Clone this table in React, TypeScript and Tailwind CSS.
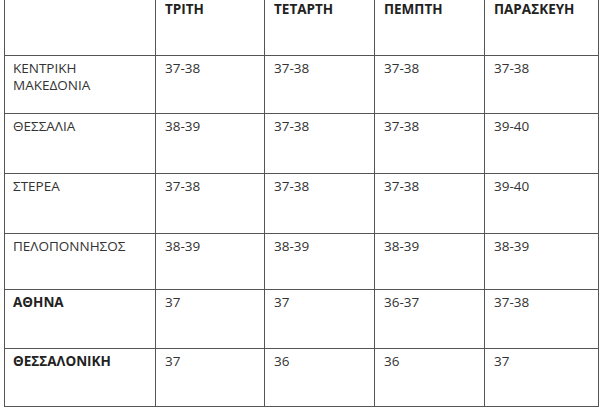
const days = ['ΤΡΙΤΗ', 'ΤΕΤΑΡΤΗ', 'ΠΕΜΠΤΗ', 'ΠΑΡΑΣΚΕΥΗ'];

type Row = {
  region: string[];
  bold?: boolean;
  values: string[];
  height: string;
};

const rows: Row[] = [
  { region: ['ΚΕΝΤΡΙΚΗ', 'ΜΑΚΕΔΟΝΙΑ'], values: ['37-38', '37-38', '37-38', '37-38'], height: 'h-[58px]' },
  { region: ['ΘΕΣΣΑΛΙΑ'], values: ['38-39', '37-38', '37-38', '39-40'], height: 'h-[60px]' },
  { region: ['ΣΤΕΡΕΑ'], values: ['37-38', '37-38', '37-38', '39-40'], height: 'h-[60px]' },
  { region: ['ΠΕΛΟΠΟΝΝΗΣΟΣ'], values: ['38-39', '38-39', '38-39', '38-39'], height: 'h-[56px]' },
  { region: ['ΑΘΗΝΑ'], bold: true, values: ['37', '37', '36-37', '37-38'], height: 'h-[59px]' },
  { region: ['ΘΕΣΣΑΛΟΝΙΚΗ'], bold: true, values: ['37', '36', '36', '37'], height: 'h-[58px]' },
];

export default function App() {
  return (
    <div className="w-[600px] h-[407px] overflow-hidden bg-white font-['Open_Sans',sans-serif] text-[13.5px] leading-[17px] text-[#333333]">
      <table className="ml-[4px] w-[594px] table-fixed border-collapse">
        <colgroup>
          <col className="w-[151px]" />
          <col className="w-[109px]" />
          <col className="w-[110px]" />
          <col className="w-[110px]" />
          <col className="w-[114px]" />
        </colgroup>
        <thead>
          <tr className="h-[55px]">
            <th className="border-x border-b border-[#555555] align-top" />
            {days.map((d) => (
              <th
                key={d}
                className="border-x border-b border-[#555555] px-[9px] pt-[1px] text-left align-top font-bold text-[#222222]"
              >
                {d}
              </th>
            ))}
          </tr>
        </thead>
        <tbody>
          {rows.map((r) => (
            <tr key={r.region.join(' ')} className={r.height}>
              <td
                className={`border border-[#555555] px-[8px] pt-[4px] align-top ${
                  r.bold ? 'font-bold text-[#222222]' : ''
                }`}
              >
                {r.region.map((line) => (
                  <div key={line}>{line}</div>
                ))}
              </td>
              {r.values.map((v, i) => (
                <td key={i} className="border border-[#555555] px-[9px] pt-[4px] align-top">
                  {v}
                </td>
              ))}
            </tr>
          ))}
        </tbody>
      </table>
    </div>
  );
}
